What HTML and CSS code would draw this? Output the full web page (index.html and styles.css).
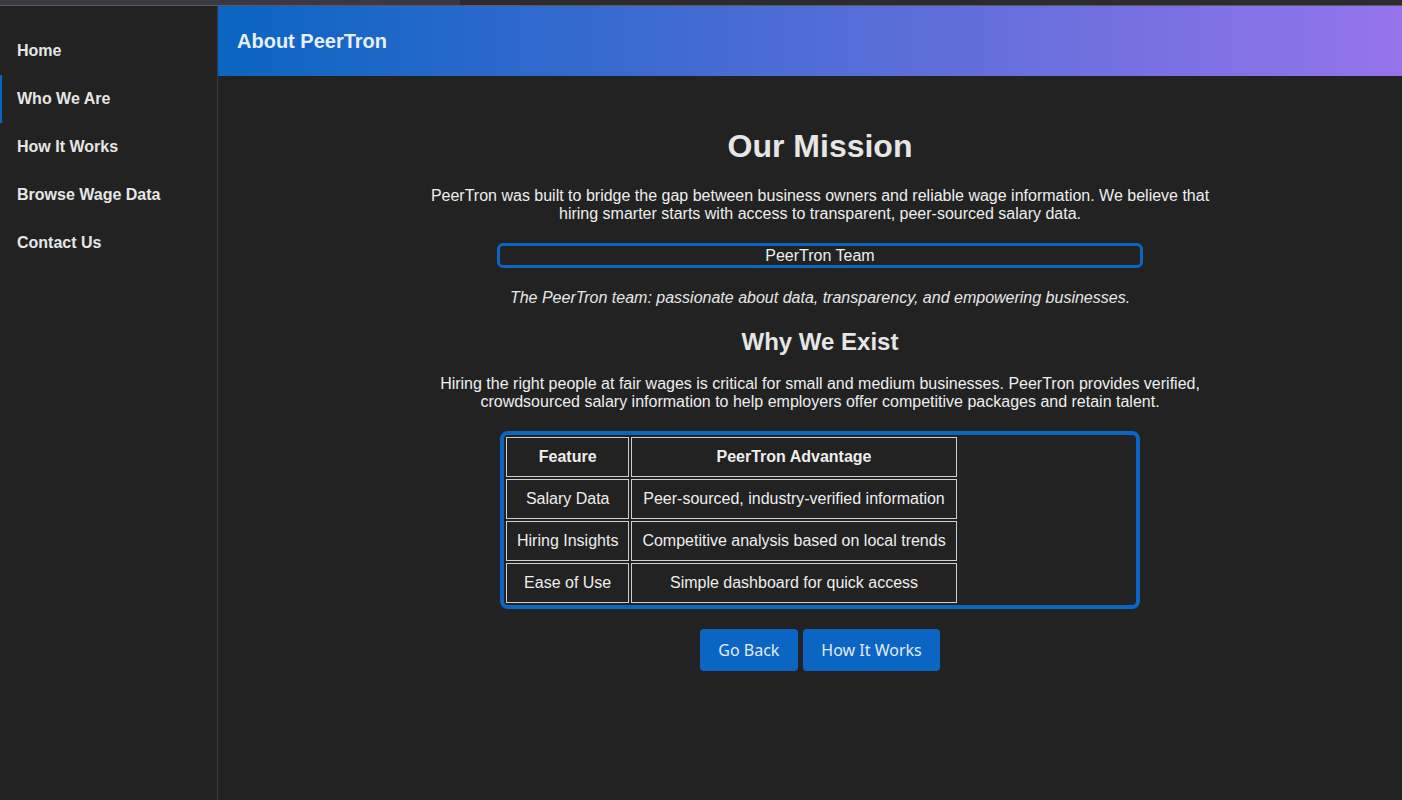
FILE: index.html
```html
<!DOCTYPE html>
<html lang="en">
<head>
<meta charset="utf-8">
<title>About PeerTron</title>
<link rel="stylesheet" href="styles.css">
</head>
<body>
<div class="chrome"></div>
<div class="layout">
  <nav class="sidebar">
    <a class="nav-item" href="#">Home</a>
    <a class="nav-item active" href="#">Who We Are</a>
    <a class="nav-item" href="#">How It Works</a>
    <a class="nav-item" href="#">Browse Wage Data</a>
    <a class="nav-item" href="#">Contact Us</a>
  </nav>
  <div class="main">
    <header class="topbar">About PeerTron</header>
    <section class="content">
      <h1 class="title">Our Mission</h1>
      <p class="text">PeerTron was built to bridge the gap between business owners and reliable wage information. We believe that hiring smarter starts with access to transparent, peer-sourced salary data.</p>
      <div class="team-box">PeerTron Team</div>
      <p class="caption">The PeerTron team: passionate about data, transparency, and empowering businesses.</p>
      <h2 class="subtitle">Why We Exist</h2>
      <p class="text">Hiring the right people at fair wages is critical for small and medium businesses. PeerTron provides verified, crowdsourced salary information to help employers offer competitive packages and retain talent.</p>
      <div class="table-box">
        <table class="features">
          <tr><th>Feature</th><th>PeerTron Advantage</th></tr>
          <tr><td>Salary Data</td><td>Peer-sourced, industry-verified information</td></tr>
          <tr><td>Hiring Insights</td><td>Competitive analysis based on local trends</td></tr>
          <tr><td>Ease of Use</td><td>Simple dashboard for quick access</td></tr>
        </table>
      </div>
      <div class="actions">
        <button class="btn">Go Back</button>
        <button class="btn">How It Works</button>
      </div>
    </section>
  </div>
</div>
</body>
</html>
```

FILE: styles.css
```css
* { box-sizing: border-box; }
html, body {
  margin: 0;
  padding: 0;
  height: 100%;
  background: #222222;
  font-family: "Liberation Sans", Arial, sans-serif;
  color: #e6e6e6;
}
body {
  display: flex;
  flex-direction: column;
  overflow: hidden;
}
.chrome {
  height: 6px;
  flex: none;
  background: linear-gradient(90deg, #3a3843 0, #3a3843 460px, #2c2b30 460px);
  border-bottom: 1px solid #5a5866;
}
.layout {
  flex: 1;
  display: flex;
  min-height: 0;
}
.sidebar {
  width: 218px;
  flex: none;
  background: #222222;
  border-right: 1px solid #3a3a3a;
  padding-top: 21px;
  display: flex;
  flex-direction: column;
}
.nav-item {
  display: block;
  height: 48px;
  line-height: 20px;
  padding: 14px 15px;
  border-left: 2px solid transparent;
  color: #e6e6e6;
  font-weight: bold;
  font-size: 16px;
  text-decoration: none;
}
.nav-item.active {
  border-left-color: #0a66c2;
}
.main {
  flex: 1;
  display: flex;
  flex-direction: column;
  min-width: 0;
}
.topbar {
  height: 70px;
  flex: none;
  display: flex;
  align-items: center;
  padding-left: 19px;
  font-size: 20px;
  font-weight: bold;
  color: #e8eefa;
  background: linear-gradient(90deg, #0a65c1 0%, #9574ec 100%);
}
.content {
  padding: 31px 0 0 20px;
  display: flex;
  flex-direction: column;
  align-items: center;
  text-align: center;
}
.title {
  font-size: 32px;
  margin: 21px 0 22px;
  line-height: 37px;
  color: #e6e6e6;
}
.subtitle {
  font-size: 24px;
  margin: 21px 0 19px;
  line-height: 28px;
  color: #e6e6e6;
}
.text {
  font-size: 16px;
  line-height: 18px;
  margin: 0;
  max-width: 800px;
  color: #eeeeee;
}
.team-box {
  width: 646px;
  margin: 20px 0 21px;
  border: 3px solid #0a66c2;
  border-radius: 6px;
  line-height: 19px;
  font-size: 16px;
  color: #eeeeee;
}
.caption {
  margin: 0;
  font-style: italic;
  font-size: 16px;
  line-height: 18px;
  color: #e6e6e6;
}
.table-box {
  width: 640px;
  margin-top: 20px;
  border: 4px solid #0a66c2;
  border-radius: 8px;
  text-align: left;
}
.features {
  border-spacing: 2px;
  font-size: 16px;
  color: #eeeeee;
}
.features th, .features td {
  border: 1px solid #cfcfcf;
  padding: 10px;
  text-align: center;
  line-height: 18px;
}
.features th { font-weight: bold; }
.actions {
  margin-top: 20px;
  display: flex;
  gap: 5px;
}
.btn {
  height: 42px;
  padding: 0 18.5px;
  border: none;
  border-radius: 4px;
  background: #0a66c2;
  color: #e3ebf7;
  font-family: "Noto Sans", "Open Sans", sans-serif;
  font-size: 16px;
}
```
